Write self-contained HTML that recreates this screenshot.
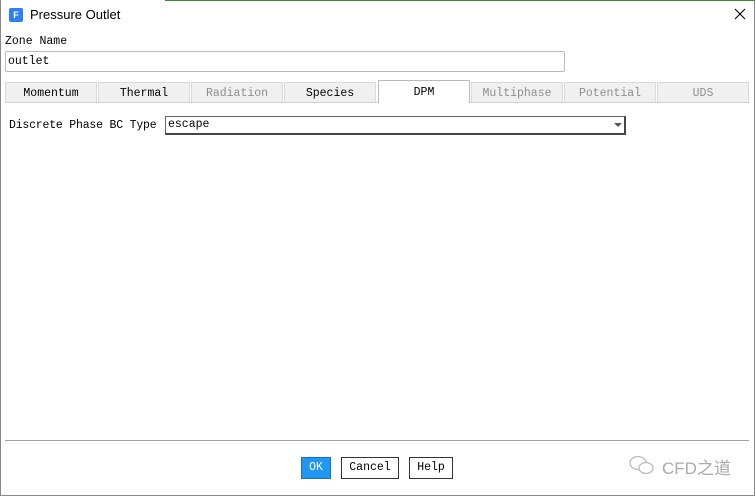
<!DOCTYPE html>
<html><head><style>
body{margin:0;width:755px;height:496px;background:#fff;position:relative;overflow:hidden;font-family:"Liberation Mono","Noto Sans CJK SC",monospace;font-size:11.5px;color:#000}
.a{position:absolute}
.tab{position:absolute;top:82px;height:20px;width:92px;background:#f0f0f0;border:1px solid #d9d9d9;border-bottom:none;text-align:center;line-height:21px;box-sizing:border-box}
.dis{color:#8e8e8e}
.btn{position:absolute;top:457px;height:22px;border:1px solid #333;box-sizing:border-box;text-align:center;line-height:20px;background:#fff}
</style></head><body>
<div class="a" style="left:0;top:0;width:755px;height:496px;border-left:1px solid #888;border-right:1px solid #888;border-bottom:1px solid #888;box-sizing:border-box"></div>
<div class="a" style="left:165px;top:0;width:590px;height:1px;background:#3a8a3a"></div>
<div class="a" style="left:9px;top:8px;width:14px;height:14px;background:#2f7ff0;color:#fff;font:bold 9px 'Liberation Sans',sans-serif;text-align:center;line-height:14px;border-radius:2px">F</div>
<div class="a" style="left:30px;top:7px;font:13px 'Liberation Sans',sans-serif">Pressure Outlet</div>
<svg class="a" style="left:734px;top:8px" width="12" height="12"><path d="M1 1L11 11M11 1L1 11" stroke="#000" stroke-width="1.1"/></svg>
<div class="a" style="left:5px;top:35px">Zone Name</div>
<div class="a" style="left:5px;top:51px;width:560px;height:21px;border:1px solid #bbb;border-radius:2px;box-sizing:border-box;padding:2px 2px;line-height:15px">outlet</div>
<div class="tab" style="left:5px">Momentum</div>
<div class="tab" style="left:98px">Thermal</div>
<div class="tab dis" style="left:191px">Radiation</div>
<div class="tab" style="left:284px">Species</div>
<div class="tab" style="left:378px;top:80px;height:23px;background:#fff;border-color:#bbb;line-height:24px">DPM</div>
<div class="tab dis" style="left:471px">Multiphase</div>
<div class="tab dis" style="left:564px">Potential</div>
<div class="tab dis" style="left:657px">UDS</div>
<div class="a" style="left:5px;top:102px;width:373px;height:1px;background:#d0d0d0"></div>
<div class="a" style="left:470px;top:102px;width:280px;height:1px;background:#d0d0d0"></div>
<div class="a" style="left:9px;top:119px;letter-spacing:-0.2px">Discrete Phase BC Type</div>
<div class="a" style="left:165px;top:116px;width:461px;height:19px;border:1px solid #666;border-right:2px solid #444;border-bottom:2px solid #444;box-sizing:border-box;padding-left:2px;line-height:16px">escape</div>
<div class="a" style="left:614px;top:123px;width:0;height:0;border-left:4px solid transparent;border-right:4px solid transparent;border-top:4px solid #555"></div>
<div class="a" style="left:5px;top:440px;width:744px;height:1px;background:#a0a0a0"></div>
<div class="btn" style="left:301px;width:30px;background:#2196f3;color:#fff;border-color:#1a6fb8">OK</div>
<div class="btn" style="left:341px;width:58px">Cancel</div>
<div class="btn" style="left:409px;width:44px">Help</div>
<svg class="a" style="left:628px;top:454px" width="28" height="22"><ellipse cx="10" cy="9" rx="8" ry="6.5" fill="none" stroke="#bbb" stroke-width="1.3"/><ellipse cx="18" cy="14" rx="7" ry="5.5" fill="#fff" stroke="#bbb" stroke-width="1.3"/></svg>
<div class="a" style="left:662px;top:454px;font:17px 'Liberation Sans','Noto Sans CJK SC',sans-serif;color:#aaa">CFD之道</div>
</body></html>
